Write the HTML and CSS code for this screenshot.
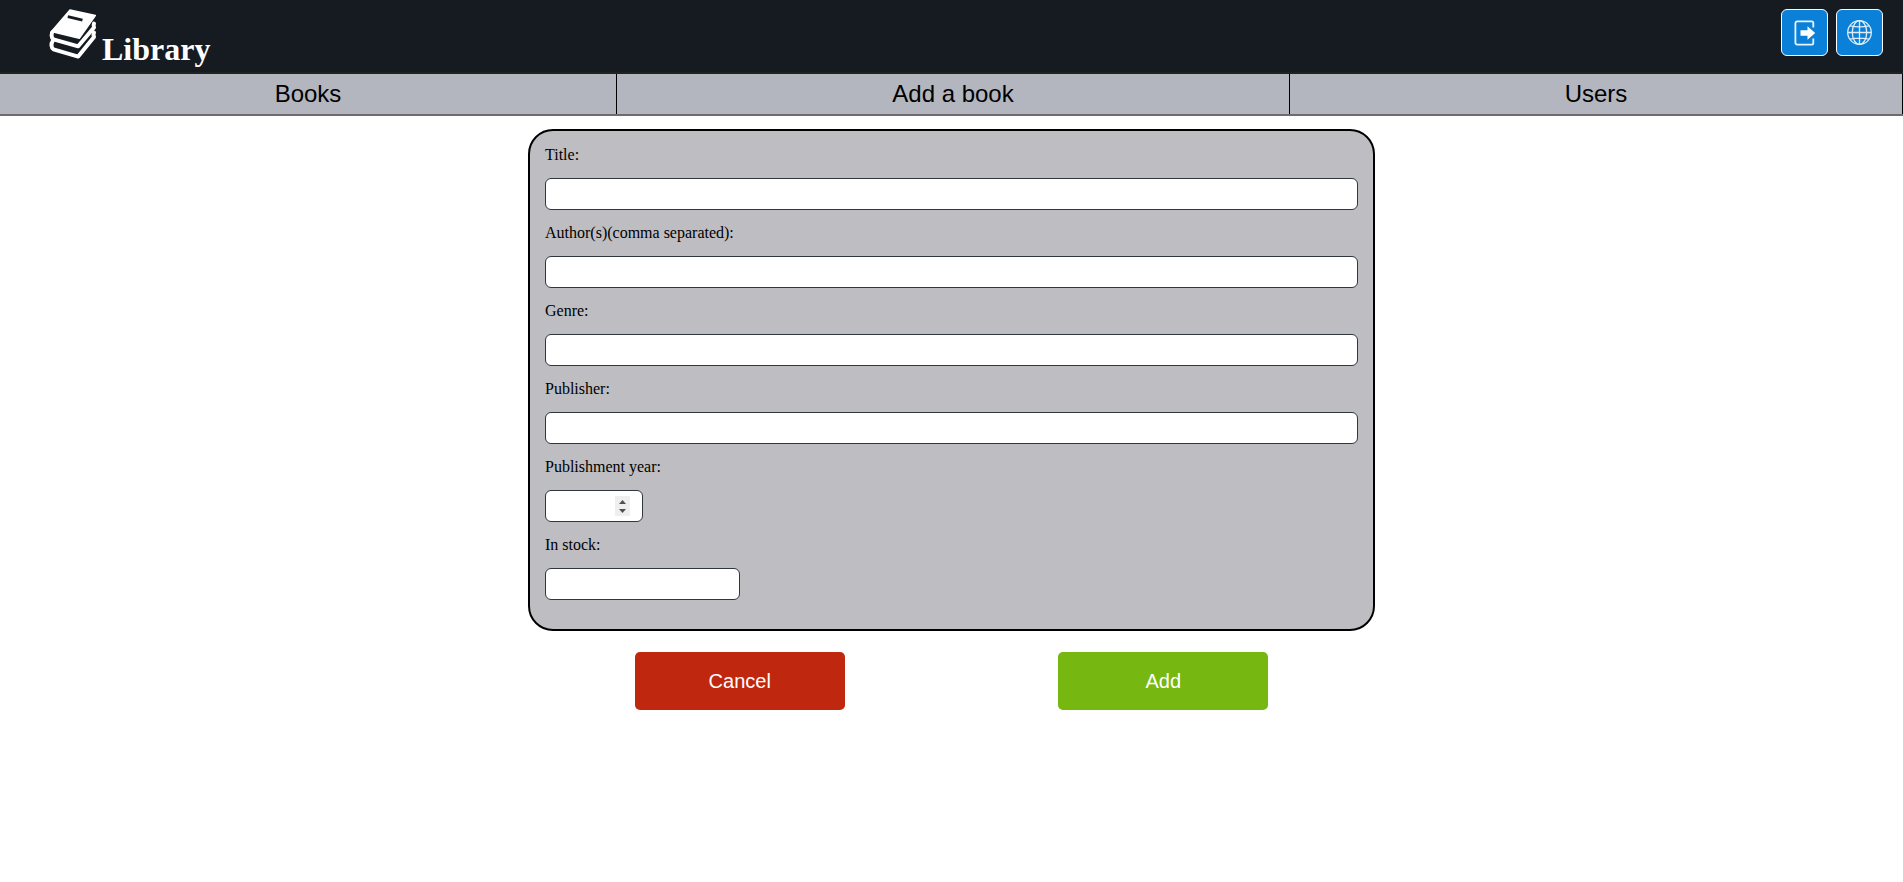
FILE: index.html
```html
<!DOCTYPE html>
<html lang="en">
<head>
<meta charset="utf-8">
<title>Library</title>
<link rel="stylesheet" href="styles.css">
</head>
<body>
<header class="header">
  <a class="brand">
    <svg class="brand-icon" viewBox="0 0 48 52" width="48" height="52">
      <path fill="#fff" stroke="#fff" stroke-width="1.500" stroke-linejoin="round" d="M23 2L48.300 7.600L32.300 30.200L6.500 24L3.700 24.500Z"/>
      <g fill="none" stroke="#fff" stroke-width="4" stroke-linejoin="round" stroke-linecap="round">
        <path d="M6 23.500C4 25 4 29.800 6.500 31.300L31.200 38.300L47 19.500Q46.200 17.500 47 15.500"/>
        <path d="M5.500 33.500C4 35.500 4 40 6.500 41.300L31.200 48.600L47 29Q46 27 47 24.500"/>
      </g>
      <path fill="none" stroke="#161b22" stroke-width="3" d="M20.800 8.600L35.500 12.100"/>
    </svg>
    <span class="brand-name">Library</span>
  </a>
  <div class="tools">
    <button class="tool" aria-label="Log out">
      <svg viewBox="0 0 26 26" width="26" height="26">
        <path fill="none" stroke="#e8f3fc" stroke-width="1.800" d="M21.300 7.500V3Q21.300 1.400 19.700 1.400H5.500Q3.400 1.400 3.400 3.500V22.500Q3.400 24.600 5.500 24.600H19.700Q21.300 24.600 21.300 23V18.500"/>
        <path fill="#fff" d="M8.500 10.200H15.500V6.300L23.200 13L15.500 19.700V15.800H8.500Z"/>
      </svg>
    </button>
    <button class="tool" aria-label="Language">
      <svg viewBox="0 0 25 25" width="25" height="25" fill="none" stroke="#dceefb" stroke-width="1.300">
        <circle cx="12.500" cy="12.500" r="11.800"/><ellipse cx="12.500" cy="12.500" rx="7.200" ry="11.800"/>
        <path d="M12.500 1V24M1 12.500H24M3 5.800Q12.500 8 22 5.800M3 19.200Q12.500 17 22 19.200"/>
      </svg>
    </button>
  </div>
</header>
<nav class="nav">
  <a class="nav-item">Books</a>
  <a class="nav-item">Add a book</a>
  <a class="nav-item">Users</a>
</nav>
<main>
  <form class="card">
    <label class="field">Title:<input class="input" type="text"></label>
    <label class="field">Author(s)(comma separated):<input class="input" type="text"></label>
    <label class="field">Genre:<input class="input" type="text"></label>
    <label class="field">Publisher:<input class="input" type="text"></label>
    <label class="field">Publishment year:
      <span class="input year"><span class="spinner"><svg width="15" height="20" viewBox="0 0 15 20" fill="#505050"><path d="M4 8L7.500 4L11 8ZM4 13L7.500 17L11 13Z"/></svg></span></span>
    </label>
    <label class="field">In stock:<input class="input stock" type="text"></label>
  </form>
  <div class="actions">
    <button class="action cancel">Cancel</button>
    <button class="action add">Add</button>
  </div>
</main>
</body>
</html>
```

FILE: styles.css
```css
* { box-sizing: border-box; }
body { margin: 0; background: #fff; font-family: "Liberation Serif", serif; color: #000; }
.header { height: 74px; background: #161b22; border-bottom: 2px solid #212124; display: flex; justify-content: space-between; padding: 9px 20px 0 47px; }
.brand { display: flex; align-items: flex-start; gap: 7px; color: #fff; }
.brand-icon { display: block; overflow: visible; margin-top: -1px; }
.brand-name { font-size: 32px; line-height: 36px; font-weight: bold; margin-top: 22px; }
.tools { display: flex; gap: 8px; }
.tool { width: 47px; height: 47px; padding: 0; border: 1px solid #fff; border-radius: 6px; background: #0a80d8; display: flex; align-items: center; justify-content: center; }
.nav { display: grid; grid-template-columns: 617px 673px 1fr; height: 42px; background: #b3b6bf; border-bottom: 2px solid #6c6c70; }
.nav-item { border-right: 1px solid #000; text-align: center; font: 24px/40px "Liberation Sans", sans-serif; }
.card { width: 847px; height: 502px; margin: 13px auto 0; border: 2px solid #000; border-radius: 25px; background: #bebdc2; padding: 15px; }
.field { display: block; height: 78px; font-size: 16px; line-height: 18px; }
.input { display: block; width: 100%; height: 32px; margin-top: 14px; border: 1px solid #30363d; border-radius: 6px; background: #fff; }
.year { width: 98px; padding: 5px 12px 0 0; display: flex; justify-content: flex-end; }
.spinner { width: 15px; height: 20px; background: #efefef; }
.spinner svg { display: block; }
.stock { width: 195px; }
.actions { width: 847px; margin: 21px auto 0; display: flex; justify-content: space-around; }
.action { width: 210px; height: 58px; border: 0; border-radius: 5px; color: #fff; font: 20px "Liberation Sans", sans-serif; }
.cancel { background: #c0270f; }
.add { background: #76b711; }
```
